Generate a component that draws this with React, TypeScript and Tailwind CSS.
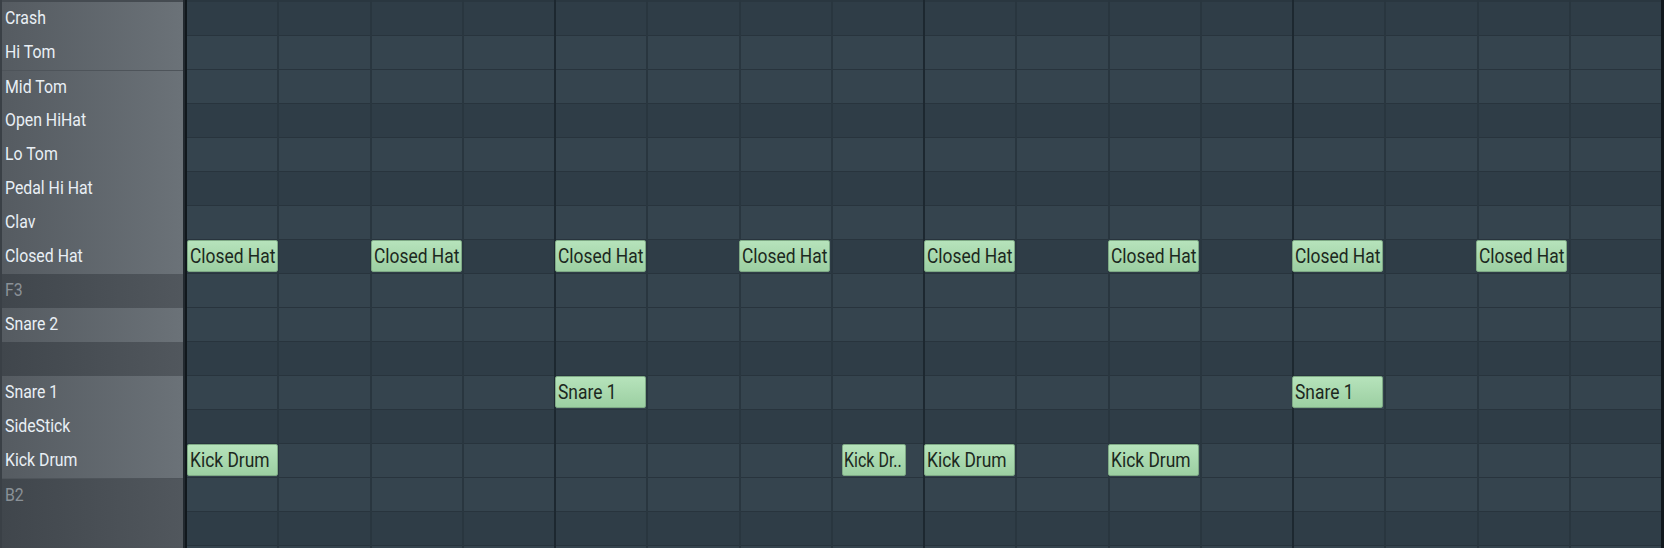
import React from "react";

type Row = { name: string; black: boolean; named: boolean; octaveTop?: boolean };

const rows: Row[] = [
  { name: "Crash", black: true, named: true },
  { name: "Hi Tom", black: false, named: true },
  { name: "Mid Tom", black: false, named: true, octaveTop: true },
  { name: "Open HiHat", black: true, named: true },
  { name: "Lo Tom", black: false, named: true },
  { name: "Pedal Hi Hat", black: true, named: true },
  { name: "Clav", black: false, named: true },
  { name: "Closed Hat", black: true, named: true },
  { name: "F3", black: false, named: false },
  { name: "Snare 2", black: false, named: true },
  { name: "", black: true, named: false },
  { name: "Snare 1", black: false, named: true },
  { name: "SideStick", black: true, named: true },
  { name: "Kick Drum", black: false, named: true },
  { name: "B2", black: false, named: false, octaveTop: true },
  { name: "", black: true, named: false },
  { name: "", black: false, named: false },
];

const COL = 1474 / 16;

type Note = { label: string; row: number; col: number; len: number; tight?: boolean };

const notes: Note[] = [
  ...[0, 2, 4, 6, 8, 10, 12, 14].map((c) => ({ label: "Closed Hat", row: 7, col: c, len: 1 })),
  { label: "Snare 1", row: 11, col: 4, len: 1 },
  { label: "Snare 1", row: 11, col: 12, len: 1 },
  { label: "Kick Drum", row: 13, col: 0, len: 1 },
  { label: "Kick Dr..", row: 13, col: 7.12, len: 0.705, tight: true },
  { label: "Kick Drum", row: 13, col: 8, len: 1 },
  { label: "Kick Drum", row: 13, col: 10, len: 1 },
];

export default function App() {
  return (
    <div
      className="flex h-[548px] w-[1664px] overflow-hidden bg-[#2b3840]"
      style={{ fontFamily: "Roboto, 'Liberation Sans', sans-serif" }}
    >
      {/* Label panel */}
      <div className="flex h-full w-[183px] shrink-0 flex-col border-l-2 border-[#3a4046] bg-[#454b51] pt-[2px]">
        {rows.map((r, i) => (
          <div
            key={i}
            className={`flex h-[34px] shrink-0 items-center pb-[3px] pl-[3px] text-[18px] ${
              r.named
                ? "bg-gradient-to-r from-[#555b61] to-[#6b7278] text-[#e9eff5]"
                : "bg-gradient-to-r from-[#40464c] to-[#51575d] text-[#8a9197]"
            } ${r.octaveTop ? "border-t border-[#4e545a]" : ""}`}
          >
            <span className="inline-block origin-left scale-x-[0.88] whitespace-nowrap">{r.name}</span>
          </div>
        ))}
      </div>
      {/* Separator */}
      <div className="h-full w-[2px] shrink-0 bg-[#22292f]" />
      <div className="h-full w-[2px] shrink-0 bg-[#11181d]" />
      {/* Grid */}
      <div className="relative h-full w-[1474px] shrink-0 overflow-hidden bg-[#2a3740] pt-[2px]">
        {rows.map((r, i) => (
          <div
            key={i}
            className={`h-[34px] shrink-0 border-b border-[#28343d] ${
              r.black ? "bg-[#2f3d47]" : "bg-[#35444e]"
            }`}
          />
        ))}
        <div className="absolute inset-0 flex">
          {Array.from({ length: 16 }).map((_, c) => (
            <div
              key={c}
              className={`h-full flex-1 ${
                c === 0 ? "" : c % 4 === 0 ? "border-l-2 border-[#1d2830]" : "border-l-2 border-[#29363f]"
              }`}
            />
          ))}
        </div>
        {notes.map((n, i) => (
          <div
            key={i}
            className={`absolute flex h-[32px] items-center overflow-hidden whitespace-nowrap rounded-[2px] border border-[#7ea985] bg-gradient-to-b from-[#b6e3bb] to-[#9ccfa2] text-[20px] text-[#1c2820] ${
              n.tight ? "pl-[1px]" : "pl-[2px]"
            }`}
            style={{
              left: `${n.col * COL - 0.5}px`,
              top: `${2 + n.row * 34}px`,
              width: `${n.len * COL - 1}px`,
            }}
          >
            <span
              className={`inline-block origin-left ${n.tight ? "scale-x-[0.8]" : "scale-x-[0.87]"}`}
            >
              {n.label}
            </span>
          </div>
        ))}
      </div>
      <div className="h-full w-[3px] shrink-0 bg-[#11181d]" />
    </div>
  );
}
